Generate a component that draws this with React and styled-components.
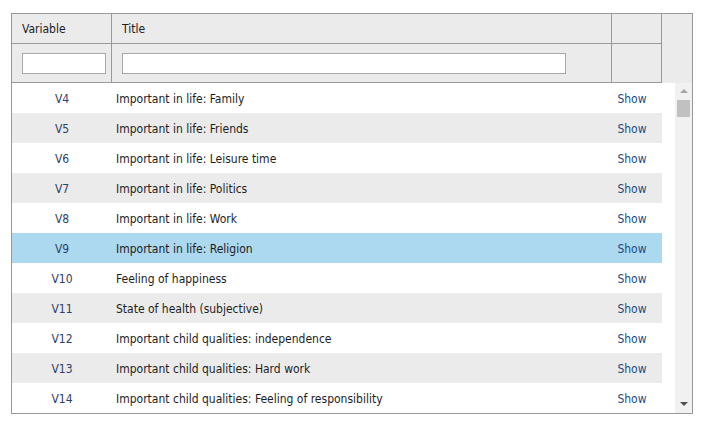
import React from 'react'
import styled, { createGlobalStyle } from 'styled-components'

const rows = [
    { id: 'V4', title: 'Important in life: Family' },
    { id: 'V5', title: 'Important in life: Friends' },
    { id: 'V6', title: 'Important in life: Leisure time' },
    { id: 'V7', title: 'Important in life: Politics' },
    { id: 'V8', title: 'Important in life: Work' },
    { id: 'V9', title: 'Important in life: Religion', selected: true },
    { id: 'V10', title: 'Feeling of happiness' },
    { id: 'V11', title: 'State of health (subjective)' },
    { id: 'V12', title: 'Important child qualities: independence' },
    { id: 'V13', title: 'Important child qualities: Hard work' },
    { id: 'V14', title: 'Important child qualities: Feeling of responsibility' },
]

const App = () => {
    return (
        <Page>
            <GlobalStyle />
            <Grid>
                <Header>
                    <HeadTable>
                        <HeadRow>
                            <HeadCell $w={100}>Variable</HeadCell>
                            <HeadCell $w={500}>Title</HeadCell>
                            <HeadCell $w={50} />
                        </HeadRow>
                        <FilterRow>
                            <HeadCell $w={100}><Filter $w={84} /></HeadCell>
                            <HeadCell $w={500}><Filter $w={444} /></HeadCell>
                            <HeadCell $w={50} />
                        </FilterRow>
                    </HeadTable>
                </Header>
                <Body>
                    <Rows>
                        {rows.map((r, i) => (
                            <Row key={r.id} $alt={i % 2 === 1} $selected={r.selected}>
                                <VarCell>{r.id}</VarCell>
                                <TitleCell>{r.title}</TitleCell>
                                <ShowCell>Show</ShowCell>
                            </Row>
                        ))}
                    </Rows>
                    <Scrollbar>
                        <ArrowUp />
                        <Thumb />
                        <Track />
                        <ArrowDown />
                    </Scrollbar>
                </Body>
            </Grid>
        </Page>
    )
}

const GlobalStyle = createGlobalStyle`
body {
    margin: 0;
    background: #fff;
    font-family: "DejaVu Sans Condensed", "DejaVu Sans", sans-serif;
    font-size: 12px;
}
`

const Page = styled.div`
padding: 13px 11px;
`

const Grid = styled.div`
width: 680px;
height: 399px;
border: 1px solid #999;
display: flex;
flex-direction: column;
background: #fff;
`

const Header = styled.div`
display: flex;
background: #ebebeb;
`

const HeadTable = styled.div`
display: flex;
flex-direction: column;
`

const HeadRow = styled.div`
display: flex;
height: 30px;
box-sizing: border-box;
border-bottom: 1px solid #999;
`

const FilterRow = styled(HeadRow)`
height: 39px;
`

const HeadCell = styled.div`
width: ${p => p.$w}px;
box-sizing: border-box;
border-right: 1px solid #999;
padding-left: 10px;
display: flex;
align-items: center;
color: #222;
`

const Filter = styled.input`
width: ${p => p.$w}px;
height: 21px;
box-sizing: border-box;
border: 1px solid #a9a9a9;
background: #fff;
margin: 1px 0 0 0;
padding: 0;
outline: none;
`

const Body = styled.div`
flex: 1;
display: flex;
overflow: hidden;
`

const Rows = styled.div`
width: 650px;
display: flex;
flex-direction: column;
`

const Row = styled.div`
display: flex;
height: 30px;
flex-shrink: 0;
align-items: center;
padding-top: 1px;
box-sizing: border-box;
background: ${p => p.$selected ? '#acd8f0' : p.$alt ? '#ebebeb' : '#fff'};
`

const VarCell = styled.div`
width: 100px;
text-align: center;
color: #2f4068;
`

const TitleCell = styled.div`
width: 500px;
padding-left: 4px;
box-sizing: border-box;
color: #1e1e1e;
white-space: nowrap;
`

const ShowCell = styled.div`
width: 50px;
padding-right: 10px;
box-sizing: border-box;
text-align: center;
color: #1f4c80;
`

const Scrollbar = styled.div`
width: 17px;
margin-left: auto;
background: #f1f1f1;
display: flex;
flex-direction: column;
align-items: center;
`

const ArrowUp = styled.div`
margin-top: 6px;
width: 0;
height: 0;
border-left: 4px solid transparent;
border-right: 4px solid transparent;
border-bottom: 4px solid #a3a3a3;
`

const Thumb = styled.div`
margin-top: 7px;
width: 13px;
height: 17px;
background: #c1c1c1;
`

const Track = styled.div`
flex: 1;
`

const ArrowDown = styled.div`
margin-bottom: 7px;
width: 0;
height: 0;
border-left: 4px solid transparent;
border-right: 4px solid transparent;
border-top: 4px solid #505050;
`

export default App
